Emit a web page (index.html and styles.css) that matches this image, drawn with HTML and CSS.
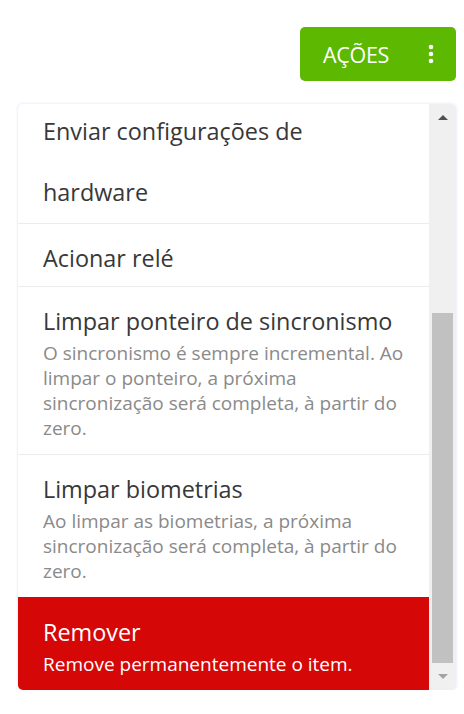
FILE: index.html
```html
<!DOCTYPE html>
<html lang="pt-BR">
<head>
    <meta charset="UTF-8">
    <meta name="viewport" content="width=device-width, initial-scale=1.0">
    <title>Ações</title>
    <link rel="stylesheet" href="styles.css">
</head>
<body>

<div class="toolbar">
    <button class="btn-actions" type="button">
        <span class="btn-label">AÇÕES</span>
        <svg class="kebab" width="6" height="20" viewBox="0 0 6 20" aria-hidden="true">
            <circle cx="3" cy="3" r="2.3" fill="#fff"/>
            <circle cx="3" cy="10" r="2.3" fill="#fff"/>
            <circle cx="3" cy="17" r="2.3" fill="#fff"/>
        </svg>
    </button>
</div>

<div class="menu">
    <ul class="menu-list">
        <li class="menu-item wide-lines">
            <span class="item-title">Enviar configurações de hardware</span>
        </li>
        <li class="menu-item">
            <span class="item-title">Acionar relé</span>
        </li>
        <li class="menu-item">
            <span class="item-title">Limpar ponteiro de sincronismo</span>
            <span class="item-desc">O sincronismo é sempre incremental. Ao limpar o ponteiro, a próxima sincronização será completa, à partir do zero.</span>
        </li>
        <li class="menu-item">
            <span class="item-title">Limpar biometrias</span>
            <span class="item-desc">Ao limpar as biometrias, a próxima sincronização será completa, à partir do zero.</span>
        </li>
        <li class="menu-item danger">
            <span class="item-title">Remover</span>
            <span class="item-desc">Remove permanentemente o item.</span>
        </li>
    </ul>

    <!-- scrollbar drawn by hand, list is scrolled to the end -->
    <div class="scrollbar">
        <div class="scroll-arrow up"></div>
        <div class="scroll-track">
            <div class="scroll-thumb"></div>
        </div>
        <div class="scroll-arrow down"></div>
    </div>
</div>

</body>
</html>
```

FILE: styles.css
```css
body {
    font-family: 'Open Sans', 'Liberation Sans', sans-serif;
    background: #ffffff;
    margin: 0;
    padding: 27px 8px 0 18px;
    color: #3a3a3a;
}

.toolbar {
    display: flex;
    justify-content: flex-end;
}

.btn-actions {
    display: flex;
    align-items: center;
    justify-content: space-between;
    width: 156px;
    height: 54px;
    padding: 0 22px 0 23px;
    border: none;
    border-radius: 5px;
    background-color: #5cb800;
    color: #ffffff;
    font-family: inherit;
    font-size: 21.5px;
    cursor: pointer;
    box-sizing: border-box;
}

.btn-label {
    letter-spacing: -0.3px;
}

.kebab {
    display: block;
}

.menu {
    display: flex;
    margin-top: 23px;
    height: 586px;
    background-color: #ffffff;
    border-radius: 5px;
    box-shadow: 0 0 3px rgba(110, 120, 240, 0.25);
    overflow: hidden;
}

.menu-list {
    flex: 1;
    display: flex;
    flex-direction: column;
    justify-content: flex-end;
    list-style: none;
    margin: 0;
    padding: 0;
    overflow: hidden;
}

.menu-item {
    display: flex;
    flex-direction: column;
    flex-shrink: 0;
    padding: 19px 25px 13px;
    border-top: 1px solid #ececec;
}

.item-title {
    font-size: 23.4px;
    line-height: 30px;
    color: #383838;
}

.item-desc {
    margin-top: 5px;
    font-size: 19px;
    line-height: 25px;
    color: #8a8a8a;
}

.wide-lines {
    padding-bottom: 0;
}

.wide-lines .item-title {
    line-height: 61px;
}

.danger {
    background-color: #d50707;
    border-top-color: #d50707;
}

.danger .item-title,
.danger .item-desc {
    color: #ffffff;
}

.scrollbar {
    display: flex;
    flex-direction: column;
    width: 27px;
    background-color: #f0f0f0;
}

.scroll-arrow {
    height: 27px;
    display: flex;
    align-items: center;
    justify-content: center;
}

.scroll-arrow::before {
    content: "";
    border-left: 5px solid transparent;
    border-right: 5px solid transparent;
}

.scroll-arrow.up::before {
    border-bottom: 5px solid #505050;
}

.scroll-arrow.down::before {
    border-top: 5px solid #a3a3a3;
}

.scroll-track {
    flex: 1;
    display: flex;
    flex-direction: column;
    justify-content: flex-end;
    padding: 0 3px;
}

.scroll-thumb {
    height: 350px;
    background-color: #c1c1c1;
}
```
